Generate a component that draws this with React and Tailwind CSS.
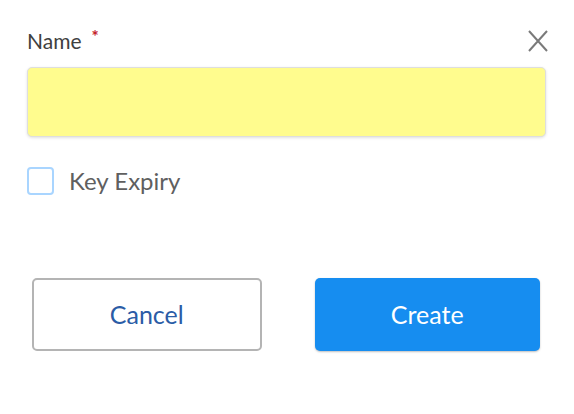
export default function App() {
    return (
        <div className="w-[574px] h-[414px] bg-white font-['Lato',sans-serif]">
            <div className="pl-[27px] pr-[28px] pt-[29px]">
                {/* Name field */}
                <div className="flex items-center justify-between h-[24px]">
                    <label className="flex items-start text-[21px] leading-[24px] text-[#404040]">
                        Name
                        <span className="ml-[10px] text-[17px] leading-[16px] font-bold text-[#c4202a]">*</span>
                    </label>
                    <button className="mr-[-3px] text-[#7a7a7a]">
                        <svg width="22" height="22" viewBox="0 0 22 22" fill="none" stroke="currentColor" strokeWidth="2">
                            <path d="M2 1l18 20M20 1L2 21" />
                        </svg>
                    </button>
                </div>
                <input
                    className="mt-[14px] block w-full h-[70px] rounded-[5px] border border-[#dedede] bg-[#fffc8e] shadow-[0_1px_3px_rgba(0,0,0,0.12)] outline-none"
                    type="text"
                />

                {/* Key Expiry */}
                <div className="mt-[30px] flex items-center">
                    <span className="w-[27px] h-[28px] rounded-[4px] border-2 border-[#a9d5ff] bg-white"></span>
                    <span className="ml-[15px] text-[24px] leading-[28px] text-[#5f5f5f]">Key Expiry</span>
                </div>

                {/* Actions */}
                <div className="mt-[83px] pl-[5px] pr-[6px] flex gap-[53px]">
                    <button className="flex-1 h-[73px] rounded-[5px] border-2 border-[#b4b4b4] bg-white text-[25px] text-[#2b5ca6]">
                        Cancel
                    </button>
                    <button className="flex-1 h-[73px] rounded-[5px] bg-[#168df0] text-[25px] text-white shadow-[0_1px_2px_rgba(0,0,0,0.25)]">
                        Create
                    </button>
                </div>
            </div>
        </div>
    );
}
